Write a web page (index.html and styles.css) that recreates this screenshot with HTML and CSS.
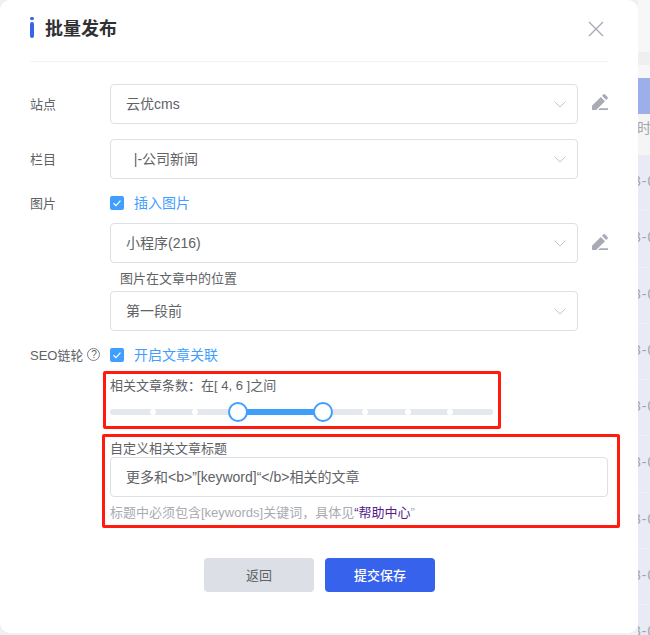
FILE: index.html
```html
<!DOCTYPE html>
<html lang="en">
<head>
  <meta charset="UTF-8">
  <meta name="viewport" content="width=device-width, initial-scale=1.0">
  <title>批量发布</title>
  <link rel="stylesheet" href="styles.css">
</head>
<body>
  <div class="page">
    <div class="left-col">
      <div class="modal">
        <div class="modal-header">
          <span class="title-mark"><i class="title-dot"></i><i class="title-bar"></i></span>
          <h1 class="modal-title">批量发布</h1>
          <svg class="close-icon" viewBox="0 0 16 16">
            <path d="M1 1l14 14M15 1L1 15" />
          </svg>
        </div>

        <div class="form-row row-site">
          <label class="form-label">站点</label>
          <div class="select">
            <span>云优cms</span>
            <svg class="chevron" viewBox="0 0 12 7"><path d="M.5.5L6 6 11.5.5" /></svg>
          </div>
          <svg class="edit-icon" viewBox="0 0 16 16">
            <path d="M0 16v-4.2L8.8 3l4.2 4.2L4.2 16z" />
            <path d="M10 1.800l1.300-1.300a1.300 1.300 0 0 1 1.800 0l2.400 2.400a1.300 1.300 0 0 1 0 1.800L14.200 6z" />
            <path d="M8 14.200h8V16H6z" />
          </svg>
        </div>

        <div class="form-row row-column">
          <label class="form-label">栏目</label>
          <div class="select">
            <span>&nbsp;&nbsp;|-公司新闻</span>
            <svg class="chevron" viewBox="0 0 12 7"><path d="M.5.5L6 6 11.5.5" /></svg>
          </div>
        </div>

        <div class="form-row row-check row-image">
          <label class="form-label">图片</label>
          <span class="checkbox">
            <svg viewBox="0 0 14 14"><path d="M3.500 7.200l2.500 2.400 4.500-5" /></svg>
          </span>
          <span class="check-text">插入图片</span>
        </div>

        <div class="form-row row-program">
          <div class="select">
            <span>小程序(216)</span>
            <svg class="chevron" viewBox="0 0 12 7"><path d="M.5.5L6 6 11.5.5" /></svg>
          </div>
          <svg class="edit-icon" viewBox="0 0 16 16">
            <path d="M0 16v-4.2L8.8 3l4.2 4.2L4.2 16z" />
            <path d="M10 1.800l1.300-1.300a1.300 1.300 0 0 1 1.800 0l2.400 2.400a1.300 1.300 0 0 1 0 1.800L14.200 6z" />
            <path d="M8 14.200h8V16H6z" />
          </svg>
        </div>

        <p class="sub-label">图片在文章中的位置</p>
        <div class="form-row row-position">
          <div class="select">
            <span>第一段前</span>
            <svg class="chevron" viewBox="0 0 12 7"><path d="M.5.5L6 6 11.5.5" /></svg>
          </div>
        </div>

        <div class="form-row row-check row-seo">
          <label class="form-label">SEO链轮<span class="help-icon">?</span></label>
          <span class="checkbox">
            <svg viewBox="0 0 14 14"><path d="M3.500 7.200l2.500 2.400 4.500-5" /></svg>
          </span>
          <span class="check-text">开启文章关联</span>
        </div>

        <section class="mark-box count-box">
          <p class="count-label">相关文章条数：在[ 4, 6 ]之间</p>
          <div class="slider">
            <div class="slider-track"></div>
            <i class="slider-stop" style="left: 11.11%"></i>
            <i class="slider-stop" style="left: 22.22%"></i>
            <i class="slider-stop" style="left: 66.67%"></i>
            <i class="slider-stop" style="left: 77.78%"></i>
            <i class="slider-stop" style="left: 88.89%"></i>
            <div class="slider-fill" style="left: 33.33%; width: 22.22%"></div>
            <i class="slider-thumb" style="left: 33.33%"></i>
            <i class="slider-thumb" style="left: 55.56%"></i>
          </div>
        </section>

        <section class="mark-box title-box">
          <p class="title-label">自定义相关文章标题</p>
          <input class="text-input" type="text" value="更多和&lt;b&gt;”[keyword]“&lt;/b&gt;相关的文章">
          <p class="hint">标题中必须包含[keywords]关键词，具体见<a class="help-link" href="#">“帮助中心</a>”</p>
        </section>

        <div class="modal-footer">
          <button class="btn btn-back">返回</button>
          <button class="btn btn-save">提交保存</button>
        </div>
      </div>
      <div class="page-bottom"></div>
    </div>

    <div class="side">
      <div class="side-band band-a"></div>
      <div class="side-band band-b"></div>
      <div class="side-band band-c"></div>
      <div class="side-band band-head"></div>
      <div class="side-band band-time"><span>间时</span></div>
      <div class="side-row"><span>3-0</span></div>
      <div class="side-row"><span>3-0</span></div>
      <div class="side-row"><span>3-0</span></div>
      <div class="side-row"><span>3-0</span></div>
      <div class="side-row"><span>3-0</span></div>
      <div class="side-row"><span>3-0</span></div>
      <div class="side-row"><span>3-0</span></div>
      <div class="side-row"><span>3-0</span></div>
      <div class="side-row"><span>3-0</span></div>
    </div>
  </div>
</body>
</html>
```

FILE: styles.css
```css
:root {
  --text-main: #606266;
  --border-color: #dcdfe6;
  --blue: #409eff;
  --brand: #3762ec;
  --mark-red: #ff1c0f;
  --side-bg: #e8ebf5;
}

* {
  margin: 0;
  padding: 0;
  box-sizing: border-box;
}

body {
  font-family: "Liberation Sans", "Noto Sans CJK SC", sans-serif;
  font-size: 13px;
  color: var(--text-main);
  background-color: var(--side-bg);
}

.page {
  display: flex;
  width: 650px;
  height: 635px;
  overflow: hidden;
}

.left-col {
  width: 638px;
  background-color: #eff0f5;
  display: flex;
  flex-direction: column;
}

.modal {
  height: 633px;
  background-color: #fff;
  border-radius: 10px;
  padding: 0 30px;
}

.page-bottom {
  height: 2px;
}

/* header */
.modal-header {
  height: 62px;
  border-bottom: 1px solid #f2f3f8;
  display: flex;
  align-items: center;
  position: relative;
}

.title-mark {
  width: 4px;
  height: 21px;
  margin-top: -6px;
  display: flex;
  flex-direction: column;
  gap: 2px;
}

.title-dot {
  height: 3px;
  border-radius: 2px;
  background-color: #3a63ea;
}

.title-bar {
  flex: 1;
  border-radius: 2px;
  background-color: #3a63ea;
}

.modal-title {
  margin-left: 11px;
  margin-top: -7px;
  font-size: 18px;
  font-weight: 700;
  color: #303133;
}

.close-icon {
  width: 16px;
  height: 16px;
  margin-left: auto;
  margin-right: 4px;
  margin-top: -3px;
  fill: none;
  stroke: #a8abb5;
  stroke-width: 1.4;
}

/* form rows */
.form-row {
  display: flex;
  align-items: center;
}

.form-label {
  width: 80px;
  flex-shrink: 0;
  display: flex;
  align-items: center;
  padding-bottom: 2px;
}

.row-site {
  margin-top: 22px;
}

.row-column {
  margin-top: 15px;
}

.row-check {
  height: 20px;
}

.row-image {
  margin-top: 14px;
}

.row-program {
  margin-top: 10px;
  padding-left: 80px;
}

.row-position {
  padding-left: 80px;
}

.row-seo {
  margin-top: 14px;
}

.select {
  width: 468px;
  height: 40px;
  border: 1px solid var(--border-color);
  border-radius: 4px;
  padding: 0 11px 0 15px;
  display: flex;
  align-items: center;
  justify-content: space-between;
  font-size: 14px;
}

.select span {
  padding-bottom: 2px;
}

.chevron {
  width: 12px;
  height: 7px;
  fill: none;
  stroke: #c0c4cc;
  stroke-width: 1;
}

.edit-icon {
  width: 16px;
  height: 16px;
  margin-left: 14px;
  margin-top: -4px;
  fill: #a8abb5;
}

.row-program .edit-icon {
  margin-top: -2px;
}

.sub-label {
  margin-left: 90px;
  margin-top: 6px;
  height: 22px;
  line-height: 20px;
}

.checkbox {
  width: 14px;
  height: 14px;
  border-radius: 2px;
  background-color: var(--blue);
  display: flex;
}

.checkbox svg {
  fill: none;
  stroke: #fff;
  stroke-width: 1.2;
}

.check-text {
  margin-left: 10px;
  padding-bottom: 2px;
  font-size: 14px;
  color: var(--blue);
}

.help-icon {
  width: 13px;
  height: 13px;
  margin-left: 4px;
  border: 1px solid #7d8086;
  border-radius: 50%;
  font-size: 10px;
  line-height: 11px;
  text-align: center;
}

/* the two red boxes */
.mark-box {
  border: 3px solid var(--mark-red);
  border-radius: 2px;
}

.count-box {
  width: 398px;
  height: 58px;
  margin-top: 6px;
  margin-left: 73px;
  padding: 2px 5px 4px 4px;
}

.count-label {
  line-height: 20px;
}

.slider {
  height: 20px;
  margin-top: 6px;
  position: relative;
}

.slider-track {
  height: 6px;
  margin-top: 7px;
  border-radius: 3px;
  background-color: #e4e7ed;
  position: absolute;
  left: 0;
  right: 0;
}

.slider-fill {
  height: 6px;
  margin-top: 7px;
  background-color: var(--blue);
  position: absolute;
}

.slider-stop {
  width: 6px;
  height: 6px;
  margin-top: 7px;
  margin-left: -3px;
  border-radius: 50%;
  background-color: #fff;
  position: absolute;
}

.slider-thumb {
  width: 20px;
  height: 20px;
  margin-left: -10px;
  border: 2px solid var(--blue);
  border-radius: 50%;
  background-color: #fff;
  position: absolute;
}

.title-box {
  width: 518px;
  height: 94px;
  margin-top: 5px;
  margin-left: 72px;
  padding: 3px 8px 1px 5px;
}

.title-label {
  line-height: 17px;
}

.text-input {
  display: block;
  width: 498px;
  height: 40px;
  border: 1px solid var(--border-color);
  border-radius: 4px;
  padding: 0 15px 2px;
  font-family: inherit;
  font-size: 14px;
  color: var(--text-main);
  outline: none;
}

.hint {
  margin-top: 6px;
  line-height: 20px;
  color: #a9abb0;
  white-space: nowrap;
}

.help-link {
  color: #551a8b;
  text-decoration: none;
}

/* footer */
.modal-footer {
  margin-top: 30px;
  padding-left: 174px;
  display: flex;
  gap: 11px;
}

.btn {
  width: 110px;
  height: 34px;
  border: none;
  border-radius: 4px;
  padding-bottom: 2px;
  font-family: inherit;
  font-size: 13px;
}

.btn-back {
  background-color: #dcdfe6;
  color: var(--text-main);
}

.btn-save {
  background-color: var(--brand);
  color: #fff;
  font-weight: 500;
}

/* table peeking out behind the modal */
.side {
  width: 12px;
  overflow: hidden;
  font-size: 14px;
  color: #a3a5ab;
  white-space: nowrap;
}

.side span {
  display: block;
  margin-left: -5px;
  letter-spacing: 1px;
}

.side-band {
  background-color: #f7f7f7;
}

.band-a {
  height: 52px;
}

.band-b {
  height: 13px;
  background-color: #efeff2;
}

.band-c {
  height: 13px;
}

.band-head {
  height: 36px;
  background-color: #9dafe8;
}

.band-time {
  height: 41px;
  padding-top: 3px;
  background-color: #f5f5f5;
}

.band-time span {
  margin-left: -15px;
  letter-spacing: 0;
}

.side-row {
  height: 56.300px;
  padding-top: 18px;
  background-color: var(--side-bg);
  border-bottom: 1px solid #eef0f8;
}
```
